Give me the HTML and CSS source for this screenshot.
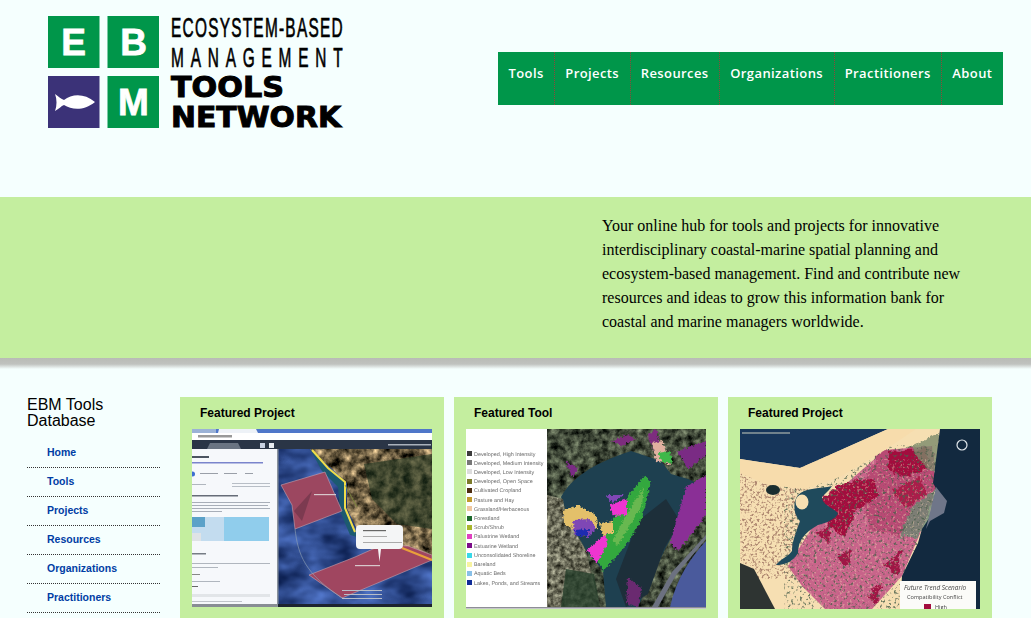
FILE: index.html
```html
<!DOCTYPE html>
<html lang="en">
<head>
<meta charset="utf-8">
<title>EBM Tools Network</title>
<link rel="stylesheet" href="styles.css">
</head>
<body>
<header class="site-header">
  <a class="logo" href="#">
    <svg width="304" height="116" viewBox="0 0 304 116" role="img" aria-label="EBM Tools Network">
      <rect x="0" y="0" width="51.500" height="52" fill="#00964a"/>
      <rect x="59.500" y="0" width="51.500" height="52" fill="#00964a"/>
      <rect x="0" y="60" width="51.500" height="52" fill="#3b3278"/>
      <rect x="59.500" y="60" width="51.500" height="52" fill="#00964a"/>
      <text class="logo-letter" x="25.700" y="39" text-anchor="middle">E</text>
      <text class="logo-letter" x="85.500" y="39" text-anchor="middle">B</text>
      <text class="logo-letter" x="85.500" y="99" text-anchor="middle">M</text>
      <path d="M7 78 C11 81 13 83 16 84 C24 78 36 77 47 86 C36 95 24 94 16 89 C13 90 11 93 7 95 C9 90 9 83 7 78 Z" fill="#fff"/>
      <text class="logo-thin" transform="translate(123 21) scale(0.55 1)" textLength="312" lengthAdjust="spacing">ECOSYSTEM-BASED</text>
      <text class="logo-thin" transform="translate(123 51) scale(0.55 1)" textLength="312" lengthAdjust="spacing">MANAGEMENT</text>
      <text class="logo-bold" x="123" y="80.500" textLength="113" lengthAdjust="spacingAndGlyphs">TOOLS</text>
      <text class="logo-bold" x="123" y="111" textLength="170" lengthAdjust="spacingAndGlyphs">NETWORK</text>
    </svg>
  </a>
  <nav class="main-nav">
    <a href="#">Tools</a>
    <a href="#">Projects</a>
    <a href="#">Resources</a>
    <a href="#">Organizations</a>
    <a href="#">Practitioners</a>
    <a href="#">About</a>
  </nav>
</header>

<section class="hero">
  <p>Your online hub for tools and projects for innovative interdisciplinary coastal-marine spatial planning and ecosystem-based management. Find and contribute new resources and ideas to grow this information bank for coastal and marine managers worldwide.</p>
</section>
<div class="hero-shadow"></div>

<main class="content">
  <aside class="sidebar">
    <h2>EBM Tools Database</h2>
    <ul>
      <li><a href="#">Home</a></li>
      <li><a href="#">Tools</a></li>
      <li><a href="#">Projects</a></li>
      <li><a href="#">Resources</a></li>
      <li><a href="#">Organizations</a></li>
      <li><a href="#">Practitioners</a></li>
    </ul>
  </aside>

  <div class="cards">
    <article class="card">
      <h3>Featured Project</h3>
      <svg class="shot" viewBox="0 0 240 180" role="img" aria-label="Map viewer showing planning areas off a coast">
        <defs>
          <filter id="soft1" color-interpolation-filters="sRGB"><feGaussianBlur stdDeviation="0.45"/></filter>
          <filter id="land1" x="0" y="0" width="100%" height="100%" color-interpolation-filters="sRGB">
            <feTurbulence type="fractalNoise" baseFrequency="0.1" numOctaves="4" seed="4"/>
            <feColorMatrix values="1.5 0 0 0 -0.32  1.3 0 0 0 -0.28  1 0 0 0 -0.24  0 0 0 0 1" result="c"/>
            <feComposite in="c" in2="SourceGraphic" operator="in"/>
          </filter>
          <filter id="water1" x="0" y="0" width="100%" height="100%" color-interpolation-filters="sRGB">
            <feTurbulence type="fractalNoise" baseFrequency="0.03 0.05" numOctaves="3" seed="8"/>
            <feColorMatrix values="0.4 0 0 0 -0.02  0.5 0 0 0 0.04  0.7 0 0 0 0.2  0 0 0 0 1" result="c"/>
            <feComposite in="c" in2="SourceGraphic" operator="in"/>
          </filter>
        </defs>
        <g filter="url(#soft1)">
          <rect x="86" y="20" width="154" height="158" fill="#2e4c8c" filter="url(#water1)"/>
          <path d="M118 20 L240 20 L240 132 L208 118 L165 100 L155 80 L155 54 L138 38 Z" fill="#5c6a4a" filter="url(#land1)"/>
          <path d="M172 35 L240 25 L240 100 L205 95 L180 70 Z" fill="#1e3420" opacity="0.600"/>
          <path d="M118 20 L136 39 L153 53 L153 79 L163 103 L172 110 L158 106 L148 82 L146 58 L130 42 Z" fill="#1c5a70"/>
          <path d="M89 56 L133 43 L150 82 L103 100 L100 76 Z" fill="#9c4760" stroke="#c7a3ae" stroke-width="0.600"/>
          <path d="M102 82 L120 62 L110 92 Z" fill="#7c3a50"/>
          <path d="M117 146 L163 128 L190 116 L216 117 L240 126 L240 131 L150 169 Z" fill="#a04660" stroke="#c7a3ae" stroke-width="0.600"/>
          <path d="M103 100 C106 125 112 145 152 170" fill="none" stroke="#93a5b5" stroke-width="0.600"/>
          <path d="M120 21 L136 39 L153 53 L153 79 L163 103" fill="none" stroke="#eedc4a" stroke-width="2"/>
          <path d="M153 56 L165 78" fill="none" stroke="#7c8a3a" stroke-width="0.800"/>
          <path d="M210 119 L240 131" fill="none" stroke="#e9a03a" stroke-width="2.400"/>

          <rect x="0" y="0" width="240" height="4" fill="#4f77c9"/>
          <path d="M0 0 H24 V4 H0 Z" fill="#9bb2d6"/>
          <path d="M27 0 H64 L66 4 H26 Z" fill="#eef2f7"/>
          <rect x="0" y="4" width="240" height="7" fill="#fff"/>
          <rect x="6" y="6" width="34" height="2.500" fill="#999"/>
          <rect x="0" y="11" width="240" height="9" fill="#2a3546"/>
          <path d="M15 20 L18 14 H46 L49 20 Z" fill="#6a7482"/>
          <rect x="68" y="14" width="5" height="5" fill="#c8d2e2"/>
          <rect x="77" y="14" width="5" height="5" fill="#e8ecf0"/>
          <rect x="196" y="15" width="43" height="1.500" fill="#aab2bc"/>

          <rect x="0" y="20" width="85" height="158" fill="#f6f8fb"/>
          <rect x="85" y="20" width="1.500" height="158" fill="#8a929c"/>
          <rect x="0" y="27" width="17" height="2" fill="#4c5460"/>
          <rect x="0" y="33" width="71" height="1.500" fill="#7a84cc"/>
          <circle cx="0.500" cy="45" r="2.500" fill="#3d6ed0"/>
          <rect x="8" y="44" width="18" height="1" fill="#9a9fa8"/>
          <rect x="32" y="44" width="13" height="1" fill="#9a9fa8"/>
          <rect x="53" y="44" width="8" height="1" fill="#9a9fa8"/>
          <rect x="0" y="55" width="14" height="1" fill="#b0b6be"/>
          <rect x="40" y="54" width="38" height="1" fill="#b8bec6"/>
          <rect x="40" y="57" width="38" height="1" fill="#b8bec6"/>
          <rect x="0" y="66" width="46" height="1.500" fill="#666c78"/>
          <rect x="0" y="73" width="78" height="1" fill="#a8aeb8"/>
          <rect x="0" y="76" width="76" height="1" fill="#a8aeb8"/>
          <rect x="0" y="79" width="78" height="1" fill="#a8aeb8"/>
          <rect x="0" y="82" width="30" height="1" fill="#a8aeb8"/>
          <rect x="0" y="88" width="77" height="24" fill="#c3dcef"/>
          <rect x="0" y="88" width="13" height="10" fill="#5ba1c8"/>
          <rect x="32" y="88" width="45" height="24" fill="#90cdec"/>
          <rect x="0" y="104" width="9" height="8" fill="#dfe3e6"/>
          <rect x="0" y="124" width="14" height="1.500" fill="#777d85"/>
          <rect x="0" y="134" width="78" height="1" fill="#b0b6be"/>
          <rect x="0" y="138" width="26" height="1" fill="#b0b6be"/>
          <rect x="0" y="145" width="8" height="1" fill="#888"/>
          <rect x="0" y="152" width="28" height="1" fill="#b0b6be"/>
          <rect x="0" y="157" width="6" height="1" fill="#666"/>
          <rect x="0" y="165" width="78" height="3" fill="#e2e5e8"/>
          <rect x="0" y="172" width="50" height="1" fill="#c0c4ca"/>
          <rect x="0" y="175" width="85" height="3" fill="#888d94"/>
          <rect x="86" y="175" width="154" height="3" fill="#1d2430"/>
          <rect x="150" y="161" width="40" height="1" fill="#b8bec8"/>
          <rect x="152" y="165" width="38" height="1" fill="#b8bec8"/>
          <rect x="150" y="169" width="40" height="1" fill="#b8bec8"/>

          <path d="M164 100 Q164 96 168 96 H207 Q211 96 211 100 V116 Q211 120 207 120 H189 L187.500 133 L186 120 H168 Q164 120 164 116 Z" fill="#f4f5f6"/>
          <rect x="171" y="101" width="23" height="1.200" fill="#666"/>
          <rect x="171" y="107" width="24" height="1" fill="#aaa"/>
          <rect x="171" y="113" width="39" height="1" fill="#aaa"/>
          <rect x="122" y="65" width="22" height="1.200" fill="#d8c8cc"/>
          <rect x="163" y="136" width="25" height="1.200" fill="#d8c8cc"/>
        </g>
      </svg>
    </article>

    <article class="card">
      <h3>Featured Tool</h3>
      <svg class="shot" viewBox="0 0 240 180" role="img" aria-label="Land cover map with legend">
        <defs>
          <filter id="soft2" color-interpolation-filters="sRGB"><feGaussianBlur stdDeviation="0.4"/></filter>
          <filter id="land2" x="0" y="0" width="100%" height="100%" color-interpolation-filters="sRGB">
            <feTurbulence type="fractalNoise" baseFrequency="0.14" numOctaves="4" seed="9"/>
            <feColorMatrix values="0.8 0 0 0 -0.14  0.85 0 0 0 -0.13  0.7 0 0 0 -0.12  0 0 0 0 1" result="c"/>
            <feComposite in="c" in2="SourceGraphic" operator="in"/>
          </filter>
          <filter id="land2b" x="0" y="0" width="100%" height="100%" color-interpolation-filters="sRGB">
            <feTurbulence type="fractalNoise" baseFrequency="0.2" numOctaves="3" seed="2"/>
            <feColorMatrix values="1 0 0 0 -0.08  1 0 0 0 -0.08  0.9 0 0 0 -0.1  0 0 0 0 1" result="c"/>
            <feComposite in="c" in2="SourceGraphic" operator="in"/>
          </filter>
          <filter id="speck" x="-5%" y="-5%" width="110%" height="110%" color-interpolation-filters="sRGB">
            <feTurbulence type="fractalNoise" baseFrequency="0.4" numOctaves="2" seed="6" result="t"/>
            <feDisplacementMap in="SourceGraphic" in2="t" scale="5" xChannelSelector="R" yChannelSelector="G" result="d"/>
            <feGaussianBlur in="d" stdDeviation="0.35"/>
          </filter>
        </defs>
        <rect width="240" height="180" fill="#fff"/>
        <g filter="url(#soft2)">
          <rect x="81" y="0" width="159" height="178" fill="#3a4a3c" filter="url(#land2)"/>
          <path d="M95 68 C105 50 125 35 165 22 L195 32 L205 45 L222 50 L240 58 L216 90 L200 118 L185 150 L172 178 L140 178 L137 142 L120 121 L105 95 Z" fill="#1e4050"/>
          <path d="M172 92 L200 70 L214 92 L198 120 L182 165 L160 178 L150 150 Z" fill="#1d2f3a"/>
          <path d="M204 178 C210 150 225 128 240 112 V178 Z" fill="#4a5a9c"/>
          <path d="M186 178 L206 143 L240 106 L240 110 L210 146 L192 178 Z" fill="#6c7180"/>
          <path d="M81 66 L97 70 L100 88 L120 122 L134 178 L81 178 Z" fill="#5d6250" filter="url(#land2b)"/>
          <path d="M100 140 L128 145 L134 178 L95 178 Z" fill="#27402c" opacity="0.800"/>
        </g>
        <g filter="url(#speck)">
          <path d="M145 12 L162 6 L170 10 L155 17 Z" fill="#7d2d7e"/>
          <path d="M182 6 L190 0 L196 25 L188 22 Z" fill="#7d2d7e"/>
          <path d="M212 22 L240 12 L240 26 L222 40 Z" fill="#7a2b84"/>
          <path d="M100 32 L112 40 L106 48 Z" fill="#7a2b84"/>
          <path d="M220 58 L240 46 L240 86 L212 122 L204 114 Z" fill="#8a2f96"/>
          <path d="M162 148 L176 160 L172 178 L160 174 Z" fill="#6a2a70"/>
          <path d="M186 14 L196 12 L205 36 L190 32 Z" fill="#e0b0a0"/>
          <path d="M192 24 L204 22 L206 34 L196 34 Z" fill="#3fb84a"/>
          <path d="M179 46 L184 52 L180 75 L174 94 L157 120 L137 142 L127 122 L131 120 L144 94 L160 70 L168 60 Z" fill="#33a83e"/>
          <path d="M178 58 L176 76 L152 116 L146 112 L166 76 Z" fill="#68b850"/>
          <path d="M97 82 L112 76 L130 86 L131 100 L112 104 L98 94 Z" fill="#e3c06a"/>
          <path d="M107 91 L125 90 L130 100 L122 108 L108 106 Z" fill="#7f47b5"/>
          <path d="M109 101 L122 100 L122 107 L110 107 Z" fill="#1d2cb0"/>
          <path d="M121 121 L141 104 L140 118 L131 134 Z" fill="#ef35d0"/>
          <path d="M134 94 L147 92 L147 104 L136 106 Z" fill="#e3c06a"/>
          <path d="M144 76 L161 70 L161 86 L147 87 Z" fill="#ef35d0"/>
          <path d="M140 66 L158 66 L146 74 Z" fill="#7f47b5"/>
        </g>
        <g filter="url(#soft2)">
          <rect x="1" y="22" width="5" height="5" fill="#3c3c3c"/>
          <rect x="1" y="31" width="5" height="5" fill="#777"/>
          <rect x="1" y="40" width="5" height="5" fill="#ddd"/>
          <rect x="1" y="50" width="5" height="5" fill="#7c7b2a"/>
          <rect x="1" y="59" width="5" height="5" fill="#4c2c10"/>
          <rect x="1" y="68" width="5" height="5" fill="#c09a2c"/>
          <rect x="1" y="77" width="5" height="5" fill="#f0c8a0"/>
          <rect x="1" y="87" width="5" height="5" fill="#1c6a2c"/>
          <rect x="1" y="96" width="5" height="5" fill="#a8b62c"/>
          <rect x="1" y="105" width="5" height="5" fill="#e040c0"/>
          <rect x="1" y="114" width="5" height="5" fill="#7c0c88"/>
          <rect x="1" y="124" width="5" height="5" fill="#38d8e8"/>
          <rect x="1" y="133" width="5" height="5" fill="#f8f4a0"/>
          <rect x="1" y="142" width="5" height="5" fill="#88c0e8"/>
          <rect x="1" y="151" width="5" height="5" fill="#102c98"/>
          <g class="legend">
            <text x="8" y="26.500">Developed, High Intensity</text>
            <text x="8" y="35.500">Developed, Medium Intensity</text>
            <text x="8" y="44.500">Developed, Low Intensity</text>
            <text x="8" y="54">Developed, Open Space</text>
            <text x="8" y="63">Cultivated Cropland</text>
            <text x="8" y="72.500">Pasture and Hay</text>
            <text x="8" y="81.500">Grassland/Herbaceous</text>
            <text x="8" y="91">Forestland</text>
            <text x="8" y="100">Scrub/Shrub</text>
            <text x="8" y="109">Palustrine Wetland</text>
            <text x="8" y="118.500">Estuarine Wetland</text>
            <text x="8" y="127.500">Unconsolidated Shoreline</text>
            <text x="8" y="137">Bareland</text>
            <text x="8" y="146">Aquatic Beds</text>
            <text x="8" y="155.500">Lakes, Ponds, and Streams</text>
          </g>
          <rect x="0" y="178" width="240" height="1.500" fill="#8e8e96"/>
        </g>
      </svg>
    </article>

    <article class="card">
      <h3>Featured Project</h3>
      <svg class="shot" viewBox="0 0 240 180" role="img" aria-label="Future trend scenario compatibility conflict map">
        <defs>
          <filter id="soft3" color-interpolation-filters="sRGB"><feGaussianBlur stdDeviation="0.4"/></filter>
          <filter id="rough3" x="-5%" y="-5%" width="110%" height="110%" color-interpolation-filters="sRGB">
            <feTurbulence type="fractalNoise" baseFrequency="0.16" numOctaves="3" seed="3" result="t"/>
            <feDisplacementMap in="SourceGraphic" in2="t" scale="8" xChannelSelector="R" yChannelSelector="G" result="d"/>
            <feGaussianBlur in="d" stdDeviation="0.35"/>
          </filter>
          <filter id="texture3" x="0" y="0" width="100%" height="100%" color-interpolation-filters="sRGB">
            <feTurbulence type="fractalNoise" baseFrequency="0.4" numOctaves="2" seed="12"/>
            <feColorMatrix values="0 0 0 0 0.62  0 0 0 0 0.45  0 0 0 0 0.38  5 0 0 0 -2.5" result="c"/>
            <feComposite in="c" in2="SourceGraphic" operator="in"/>
          </filter>
          <filter id="texture3b" x="0" y="0" width="100%" height="100%" color-interpolation-filters="sRGB">
            <feTurbulence type="fractalNoise" baseFrequency="0.35" numOctaves="2" seed="21"/>
            <feColorMatrix values="0 0 0 0 0.3  0 0 0 0 0.38  0 0 0 0 0.3  6 0 0 0 -3.4" result="c"/>
            <feComposite in="c" in2="SourceGraphic" operator="in"/>
          </filter>
          <filter id="texture3c" x="0" y="0" width="100%" height="100%" color-interpolation-filters="sRGB">
            <feTurbulence type="fractalNoise" baseFrequency="0.4" numOctaves="2" seed="33"/>
            <feColorMatrix values="0 0 0 0 0.96  0 0 0 0 0.82  0 0 0 0 0.7  6 0 0 0 -3.4" result="c"/>
            <feComposite in="c" in2="SourceGraphic" operator="in"/>
          </filter>
        </defs>
        <rect width="240" height="180" fill="#f6dfb2"/>
        <rect x="0" y="40" width="70" height="110" fill="#fff" filter="url(#texture3)" opacity="0.800"/>
        <g filter="url(#soft3)">
          <path d="M0 134 L14 140 L35 180 H0 Z" fill="#2e3432"/>
          <path d="M48 137 L75 94 L100 60 L145 21 L192 17 L195 54 L182 100 L162 147 L132 180 L85 180 L62 157 Z" fill="#c8648a"/>
        </g>
        <g filter="url(#rough3)">
          <path d="M140 22 L192 17 L198 54 L182 100 L160 108 L130 100 L120 60 Z" fill="#b84a74"/>
          <path d="M80 70 L105 52 L134 50 L138 66 L116 82 L104 110 L88 94 Z" fill="#a30d3e"/>
          <path d="M148 22 L186 20 L188 40 L165 48 L148 40 Z" fill="#a30d3e"/>
          <path d="M152 62 L180 48 L186 66 L165 80 Z" fill="#aa1d4a"/>
          <path d="M96 128 L110 120 L108 138 Z M143 136 L162 122 L158 148 Z M128 166 L142 154 L136 176 Z M76 104 L90 96 L88 114 Z" fill="#a01545"/>
          <path d="M172 78 L196 60 L192 88 L178 108 L160 108 Z" fill="#6d8a74" opacity="0.800"/>
          <path d="M170 18 L198 4 L200 40 L188 42 Z" fill="#7a8a6a" opacity="0.800"/>
        </g>
        <rect x="44" y="16" width="152" height="164" fill="#fff" filter="url(#texture3b)" opacity="0.800"/>
        <rect x="44" y="30" width="150" height="150" fill="#fff" filter="url(#texture3c)" opacity="0.400"/>
        <g filter="url(#soft3)">
          <path d="M0 0 H148 L85 28 L60 39 L0 30 Z" fill="#17365a"/>
          <path d="M0 30 L60 39 L85 28 L148 0 L176 0 L145 21 L100 48 L65 60 L28 56 L0 44 Z" fill="#f7dcac"/>
          <path d="M200 0 L240 0 L240 180 L160 180 L162 147 L178 114 L182 100 L202 70 L193 54 Z" fill="#12293f"/>
          <path d="M196 58 L207 72 L204 84 L190 92 L186 100 Z" fill="#6f7689"/>
          <path d="M92 57 C80 60 66 58 58 66 C52 74 54 86 60 92 C56 104 52 112 52 122 C48 128 40 130 36 136 C44 136 52 134 58 124 C58 112 64 104 78 96 C88 94 98 88 98 84 C92 78 82 76 82 68 C86 64 90 60 92 57 Z" fill="#1f4a5c"/>
          <ellipse cx="62" cy="73" rx="6.500" ry="7.500" fill="#f6dfb2"/>
          <ellipse cx="33" cy="61" rx="7" ry="5" fill="#1a2e30"/>
          <circle cx="222" cy="16" r="5" fill="none" stroke="#dfe6ea" stroke-width="1.200"/>
          <rect x="2" y="3" width="48" height="2" fill="#70828c"/>
          <rect x="160" y="152" width="76" height="28" fill="#fbfbf8"/>
          <text class="map-title" x="164" y="161">Future Trend Scenario</text>
          <text class="map-sub" x="167" y="170">Compatibility Conflict</text>
          <rect x="184" y="175" width="7" height="5" fill="#a30d3e"/>
          <text class="map-sub" x="195" y="179.500">High</text>
        </g>
      </svg>
    </article>
  </div>
</main>
</body>
</html>
```

FILE: styles.css
```css
* {
  box-sizing: border-box;
}

html,
body {
  margin: 0;
  height: 618px;
  overflow: hidden;
}

body {
  background: #f5fffe;
  color: #000;
  font-family: "Liberation Sans", Arial, sans-serif;
}

a {
  text-decoration: none;
}

.site-header {
  height: 197px;
  display: flex;
  justify-content: space-between;
  align-items: flex-start;
  padding: 16px 28px 0 48px;
}

.logo {
  display: block;
  line-height: 0;
}

.logo-letter {
  font: 700 37px "Liberation Sans", sans-serif;
  fill: #fff;
  stroke: #fff;
  stroke-width: 0.8px;
}

.logo-thin {
  font: 400 28px "Liberation Sans", sans-serif;
  fill: #000;
  stroke: #000;
  stroke-width: 0.7px;
}

.logo-bold {
  font: 700 29px "DejaVu Sans", sans-serif;
  fill: #000;
  stroke: #000;
  stroke-width: 1px;
}

.main-nav {
  display: flex;
  height: 53px;
  margin-top: 36px;
  background: #00964a;
}

.main-nav a {
  padding: 13px 10.6px 0 10px;
  color: #fff;
  font: 600 13px/17px "Open Sans", sans-serif;
  letter-spacing: 0.41px;
  border-right: 1px dotted #8a4a3a;
}

.main-nav a:last-child {
  border-right: 0;
}

.hero {
  height: 161px;
  background: #c4ee9f;
  padding: 17px 0 0 602px;
}

.hero p {
  margin: 0;
  width: 375px;
  font: 16px/24px "Liberation Serif", "Times New Roman", serif;
}

.hero-shadow {
  height: 11px;
  background: linear-gradient(#b9bbb6, #c0c2bf 55%, #f5fffe);
}

.content {
  display: flex;
  padding: 28px 0 0 27px;
  gap: 20px;
}

.sidebar {
  width: 133px;
  flex: none;
}

.sidebar h2 {
  margin: 0;
  font-size: 16px;
  font-weight: 400;
  line-height: 16px;
}

.sidebar ul {
  list-style: none;
  margin: 10px 0 0;
  padding: 0;
}

.sidebar li {
  height: 29px;
  border-bottom: 1px dotted #333;
  padding: 7px 0 0 20px;
}

.sidebar a {
  display: block;
  color: #003da5;
  font-size: 10.5px;
  font-weight: 700;
  line-height: 13px;
}

.cards {
  display: flex;
  gap: 10px;
}

.card {
  width: 264px;
  height: 240px;
  background: #c4ee9f;
  padding: 9px 12px 0;
}

.card h3 {
  margin: 0 0 9px 8px;
  font-size: 12px;
  font-weight: 700;
  line-height: 14px;
}

.shot {
  display: block;
  width: 240px;
  height: 180px;
}

.legend text {
  font: 5.4px "Liberation Sans", sans-serif;
  fill: #6a6a6a;
  text-rendering: geometricPrecision;
}

.map-title {
  font: italic 6.4px "Open Sans", sans-serif;
  fill: #444;
}

.map-sub {
  font: 5.6px "Open Sans", sans-serif;
  fill: #444;
}
```
